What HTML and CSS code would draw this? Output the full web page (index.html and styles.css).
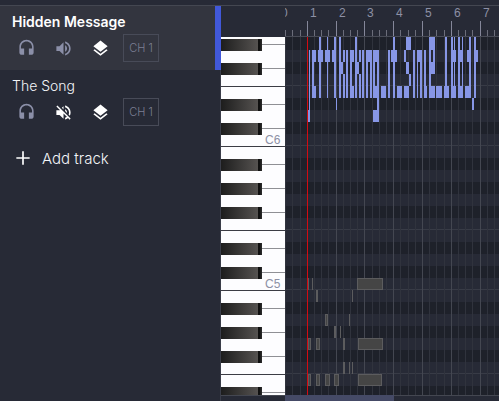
FILE: index.html
```html
<!DOCTYPE html>
<html lang="en">
<head>
<meta charset="utf-8">
<title>Arrange</title>
<link rel="stylesheet" href="styles.css">
</head>
<body>
<svg class="defs" aria-hidden="true">
  <symbol id="headset" viewBox="0 0 24 24"><path d="M12 1c-4.97 0-9 4.03-9 9v7c0 1.660 1.340 3 3 3h3v-8H5v-2c0-3.870 3.130-7 7-7s7 3.130 7 7v2h-4v8h3c1.660 0 3-1.340 3-3v-7c0-4.970-4.030-9-9-9z"/></symbol>
  <symbol id="volume" viewBox="0 0 24 24"><path d="M3 9v6h4l5 5V4L7 9H3zm13.500 3c0-1.770-1.020-3.290-2.500-4.030v8.050c1.480-.73 2.500-2.250 2.500-4.020zM14 3.230v2.060c2.890.86 5 3.540 5 6.710s-2.110 5.850-5 6.710v2.060c4.010-.91 7-4.490 7-8.770s-2.990-7.860-7-8.770z"/></symbol>
  <symbol id="muted" viewBox="0 0 24 24"><path d="M16.500 12c0-1.770-1.020-3.290-2.500-4.030v2.210l2.450 2.450c.03-.2.050-.41.050-.63zm2.500 0c0 .94-.2 1.820-.54 2.640l1.510 1.510C20.630 14.910 21 13.500 21 12c0-4.280-2.990-7.860-7-8.770v2.060c2.890.86 5 3.540 5 6.710zM4.270 3L3 4.270 7.730 9H3v6h4l5 5v-6.730l4.250 4.250c-.67.52-1.420.93-2.250 1.180v2.060c1.380-.31 2.630-.95 3.690-1.810L19.730 21 21 19.730l-9-9L4.270 3zM12 4L9.910 6.090 12 8.180V4z"/></symbol>
  <symbol id="layers" viewBox="0 0 24 24"><path d="M11.990 18.540l-7.370-5.730L3 14.070l9 7 9-7-1.630-1.270-7.380 5.740zM12 16l7.360-5.730L21 9l-9-7-9 7 1.630 1.270L12 16z"/></symbol>
  <symbol id="plus" viewBox="0 0 24 24"><path d="M20 13h-7v7h-2v-7H4v-2h7V4h2v7h7v2z"/></symbol>
</svg>
<header class="topbar"></header>
<main class="workspace">
  <aside class="tracks">
    <section class="track track--selected">
      <h2 class="track__name">Hidden Message</h2>
      <div class="track__controls">
        <button class="icon-button" aria-label="Solo"><svg><use href="#headset"/></svg></button>
        <button class="icon-button" aria-label="Mute"><svg><use href="#volume"/></svg></button>
        <button class="icon-button icon-button--on" aria-label="Ghost notes"><svg><use href="#layers"/></svg></button>
        <button class="channel">CH 1</button>
      </div>
    </section>
    <section class="track">
      <h2 class="track__name">The Song</h2>
      <div class="track__controls">
        <button class="icon-button" aria-label="Solo"><svg><use href="#headset"/></svg></button>
        <button class="icon-button icon-button--on" aria-label="Unmute"><svg><use href="#muted"/></svg></button>
        <button class="icon-button icon-button--on" aria-label="Ghost notes"><svg><use href="#layers"/></svg></button>
        <button class="channel">CH 1</button>
      </div>
    </section>
    <button class="add-track"><svg><use href="#plus"/></svg>Add track</button>
  </aside>
  <section class="editor">
    <div class="corner"></div>
    <svg class="ruler" id="ruler"></svg>
    <svg class="piano" id="piano"></svg>
    <svg class="roll" id="roll"></svg>
    <div class="scrollbar"><div class="scrollbar__thumb"></div></div>
  </section>
</main>
<script src="roll.js"></script>
</body>
</html>
```
FILE: styles.css
```css
* { box-sizing: border-box; }

body {
  display: flex;
  flex-direction: column;
  height: 100vh;
  margin: 0;
  overflow: hidden;
  background: #272a36;
  color: #fff;
  font-family: Inter, "Liberation Sans", sans-serif;
}

button {
  padding: 0;
  border: 0;
  background: none;
  color: inherit;
  font: inherit;
}

.defs { position: absolute; width: 0; height: 0; }

.topbar {
  flex: none;
  height: 6px;
  border-bottom: 1px solid #444751;
}

.workspace { display: flex; flex: 1; min-height: 0; }

.tracks {
  flex: none;
  width: 221px;
  border-right: 1px solid #3a3d49;
}

.track {
  height: 64px;
  padding: 6px 12px 0;
}

.track--selected {
  margin-right: -1px;
  border-right: 6px solid #4158d9;
  background: #33353f;
}

.track__name {
  margin: 0;
  font-size: 14px;
  font-weight: 300;
  line-height: 20px;
  color: #f4f5f8;
}

.track--selected .track__name { font-weight: 600; color: #fff; }

.track__controls {
  display: flex;
  align-items: center;
  gap: 9px;
  margin-top: 2px;
}

.icon-button {
  display: flex;
  align-items: center;
  justify-content: center;
  width: 28px;
  height: 28px;
  color: #8b8fa8;
}

.icon-button svg { width: 19px; height: 19px; fill: currentColor; }
.icon-button--on { color: #fff; }

.channel {
  width: 36px;
  height: 28px;
  border: 1px solid #484b58;
  color: #7c7f93;
  font-size: 11px;
  font-weight: 300;
}

.add-track {
  display: flex;
  align-items: center;
  gap: 9px;
  height: 48px;
  padding-left: 13px;
  font-size: 15px;
  font-weight: 300;
  color: #f4f5f8;
}

.add-track svg { width: 20px; height: 20px; fill: #fff; }

.editor {
  display: grid;
  flex: 1;
  grid-template-columns: 64px 1fr;
  grid-template-rows: 31px 1fr 6px;
  min-width: 0;
}

.ruler, .piano, .roll { display: block; width: 100%; height: 100%; min-height: 0; overflow: hidden; }
.ruler { border-bottom: 1px solid #484b56; }
.piano { background: #fdfdff; }
.roll { background: #272a36; }

svg text { font-family: "Liberation Sans", sans-serif; font-size: 12px; }
.ruler text, .piano text { fill: #8d90a5; }

.scrollbar { grid-column: 1 / -1; padding-left: 64px; border-top: 1px solid #444751; }
.scrollbar__thumb { width: 51%; height: 6px; margin-top: -1px; background: #454a66; }
```
FILE: roll.js
```js
const NS = "http://www.w3.org/2000/svg";
const KEY = 12;
const BAR = 28.8;
const ORIGIN = 22;
const BLACK = [1, 3, 6, 8, 10];

function draw(parent, tag, attrs, text) {
  const node = document.createElementNS(NS, tag);
  for (const name in attrs) node.setAttribute(name, attrs[name]);
  if (text !== undefined) node.textContent = text;
  parent.append(node);
  return node;
}
function rect(parent, x, y, width, height, fill) {
  return draw(parent, "rect", { x, y, width, height, fill });
}

const ruler = document.getElementById("ruler");
const piano = document.getElementById("piano");
const roll = document.getElementById("roll");

// Notes as [row, span, x, width, x, width, ...].
const GHOST_NOTES = [
  [20, 1, 23, 1, 27, 1, 72, 26],
  [21, 1, 31, 2, 67, 1],
  [23, 1, 40, 3, 64, 1],
  [24, 1, 49, 2, 55, 1],
  [26, 1],
  [25, 1, 23, 3, 31, 4, 58, 2, 73, 25],
  [27, 1, 58, 2, 64, 1, 67, 1],
  [28, 1, 23, 3, 31, 4, 40, 5, 49, 5, 73, 24]
];
const NOTES = [
  [0, 5, 34, 2, 42, 1, 49, 2, 54, 2, 70, 2, 108, 2, 160, 2, 166, 2, 169, 1, 173, 2, 177, 1, 184, 2, 189, 2],
  [0, 1, 121, 5, 144, 6],
  [1, 5, 24, 1],
  [1, 4, 61, 2, 77, 2, 81, 2, 103, 2, 128, 2, 139, 2],
  [1, 3, 92, 2],
  [1, 1, 27, 4, 33, 5, 40, 5, 47, 4, 58, 2, 65, 4, 74, 2, 81, 6, 88, 6, 106, 6, 119, 2, 132, 5, 144, 2, 148, 2, 166, 5, 173, 5, 182, 4, 189, 4],
  [2, 3, 81, 2, 85, 2, 88, 2, 132, 1, 135, 2],
  [2, 2, 27, 2, 65, 2],
  [2, 1, 54, 4, 70, 4, 121, 3, 144, 6],
  [3, 2, 58, 2, 74, 2],
  [3, 1, 124, 2, 144, 2],
  [4, 1, 27, 4, 65, 4, 88, 6, 96, 5, 112, 5, 119, 5, 139, 3, 144, 6, 151, 6, 159, 5, 166, 5, 173, 5, 180, 6],
  [4, 2, 92, 2],
  [5, 1, 51, 1, 187, 2],
  [6, 1, 23, 2, 88, 6]
];

function drawNotes(list, fill, stroke) {
  for (const [row, span, ...places] of list) {
    for (let i = 0; i < places.length; i += 2) {
      const x = places[i], w = places[i + 1];
      const y = row === 0 ? 0 : row * KEY + 1;
      const h = (row + span) * KEY + 1 - y;
      rect(roll, x, y, w, h, stroke || fill);
      if (stroke && w > 2) rect(roll, x + 1, y + 1, w - 2, h - 2, fill);
    }
  }
}

// Keys, from the top: row 0 is G#6.
function drawKeys(height) {
  const shade = draw(draw(piano, "defs", {}), "linearGradient", { id: "ebony" });
  [["0", "#1d1d1d"], ["0.9", "#555250"], ["0.91", "#101010"], ["0.96", "#101010"], ["0.97", "#3a3a3a"], ["1", "#1c1c1c"]]
    .forEach(([offset, color]) => draw(shade, "stop", { offset, "stop-color": color }));
  for (let row = 0; row * KEY < height; row++) {
    const note = 92 - row;
    const pitch = note % 12;
    const y = row * KEY + 2;
    if (BLACK.includes(pitch)) {
      rect(piano, 41, y + 5, 23, 1, "#8f9095");
      rect(piano, 0, y, 41, KEY, "url(#ebony)");
      rect(roll, 0, y - 1, "100%", KEY, "#1e212a");
    }
    if (pitch === 0 || pitch === 5) {
      rect(piano, 0, y + 11, 64, 1, "#3c3d45");
      rect(roll, 0, y + 10, "100%", 1, "#383b46");
    }
    if (pitch === 0) draw(piano, "text", { x: 44, y: y + 9 }, "C" + (note / 12 - 1));
  }
  rect(roll, 0, 0, "100%", 1, "#1e212a");
}

function drawBeats(width) {
  for (let beat = -4; beat * BAR / 4 + ORIGIN < width; beat++) {
    const x = Math.floor(ORIGIN + beat * BAR / 4 + 0.3);
    const isBar = beat % 4 === 0;
    rect(ruler, x, isBar ? 15 : 24, 1, 16, isBar ? "#85879a" : "#6b6d7a");
    rect(roll, x, 0, 1, "100%", isBar ? "#444751" : "#30333d");
    if (isBar && x + 10 < width) draw(ruler, "text", { x: x + 3, y: 11 }, beat / 4 + 1);
  }
}

function render() {
  const { width, height } = roll.getBoundingClientRect();
  [ruler, piano, roll].forEach((view) => view.replaceChildren());
  drawKeys(height);
  drawBeats(width);
  drawNotes(GHOST_NOTES, "#454545", "#5c5c5e");
  drawNotes(NOTES, "#8796e6");
  rect(roll, ORIGIN, 0, 1, "100%", "#d40b12");
}

render();
window.addEventListener("resize", render);
```
